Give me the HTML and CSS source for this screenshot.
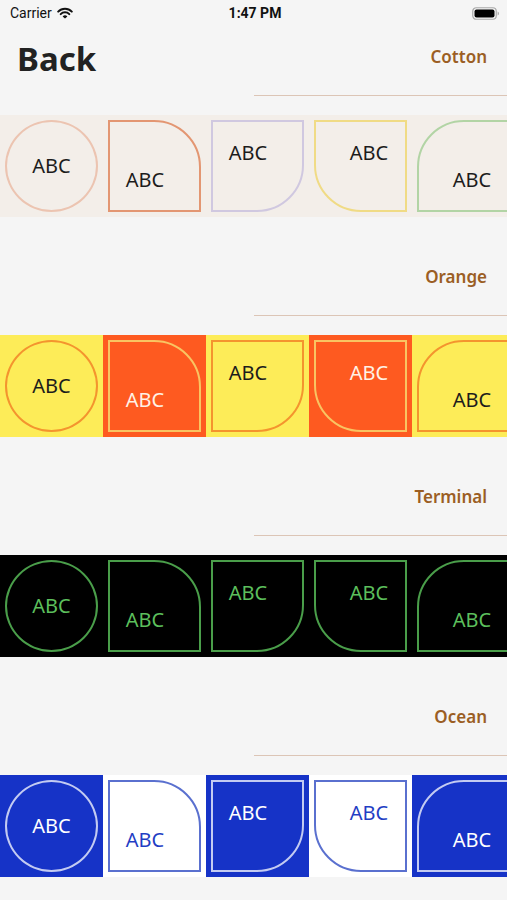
FILE: index.html
```html
<!DOCTYPE html>
<html>
<head>
<meta charset="utf-8">
<link rel="stylesheet" href="styles.css">
</head>
<body>
<div class="status">
  <div class="st-left">Carrier
    <svg class="wifi" viewBox="0 0 16 12" width="16" height="12">
      <path d="M1.2 4.6 A9.6 9.6 0 0 1 14.8 4.6" fill="none" stroke="#111" stroke-width="2" stroke-linecap="round"/>
      <path d="M3.7 7.1 A6.1 6.1 0 0 1 12.3 7.1" fill="none" stroke="#111" stroke-width="2" stroke-linecap="round"/>
      <path d="M8 11.6 L5.6 9.4 A3.4 3.4 0 0 1 10.4 9.4 Z" fill="#111"/>
    </svg>
  </div>
  <div class="st-time">1:47 PM</div>
  <div class="st-right">
    <svg viewBox="0 0 28 13" width="28" height="13">
      <rect x="0.75" y="0.75" width="23.5" height="11.5" rx="3.5" fill="none" stroke="#a9a9a9" stroke-width="1.2"/>
      <rect x="2.5" y="2.5" width="20" height="8" rx="2" fill="#000"/>
      <path d="M25.6 4.5 Q27 5 27 6.5 Q27 8 25.6 8.5 Z" fill="#a9a9a9"/>
    </svg>
  </div>
</div>

<section class="sec cotton">
  <div class="head first">
    <h1 class="title">Back</h1>
    <span class="label">Cotton</span>
  </div>
  <div class="rule"></div>
  <div class="band">
    <div class="tile t1"><div class="shape circle">ABC</div></div>
    <div class="tile t2"><div class="shape tr">ABC</div></div>
    <div class="tile t3"><div class="shape br">ABC</div></div>
    <div class="tile t4"><div class="shape bl">ABC</div></div>
    <div class="tile t5"><div class="shape tl">ABC</div></div>
  </div>
</section>

<section class="sec orange">
  <div class="head"><span class="label">Orange</span></div>
  <div class="rule"></div>
  <div class="band">
    <div class="tile a"><div class="shape circle">ABC</div></div>
    <div class="tile b"><div class="shape tr">ABC</div></div>
    <div class="tile a"><div class="shape br">ABC</div></div>
    <div class="tile b"><div class="shape bl">ABC</div></div>
    <div class="tile a"><div class="shape tl">ABC</div></div>
  </div>
</section>

<section class="sec terminal">
  <div class="head"><span class="label">Terminal</span></div>
  <div class="rule"></div>
  <div class="band">
    <div class="tile"><div class="shape circle">ABC</div></div>
    <div class="tile"><div class="shape tr">ABC</div></div>
    <div class="tile"><div class="shape br">ABC</div></div>
    <div class="tile"><div class="shape bl">ABC</div></div>
    <div class="tile"><div class="shape tl">ABC</div></div>
  </div>
</section>

<section class="sec ocean">
  <div class="head"><span class="label">Ocean</span></div>
  <div class="rule"></div>
  <div class="band">
    <div class="tile a"><div class="shape circle">ABC</div></div>
    <div class="tile b"><div class="shape tr">ABC</div></div>
    <div class="tile a"><div class="shape br">ABC</div></div>
    <div class="tile b"><div class="shape bl">ABC</div></div>
    <div class="tile a"><div class="shape tl">ABC</div></div>
  </div>
</section>
</body>
</html>
```

FILE: styles.css
```css
* { box-sizing: border-box; }
html, body { margin: 0; padding: 0; }
body {
  width: 507px;
  height: 900px;
  overflow: hidden;
  background: #f5f5f5;
  font-family: "Noto Sans", "Open Sans", sans-serif;
  color: #222;
}

.status {
  height: 28px;
  display: grid;
  grid-template-columns: 1fr auto 1fr;
  align-items: center;
  padding: 0 7px 2px 10px;
  font-family: Roboto, "Liberation Sans", sans-serif;
  font-size: 14px;
  color: #111;
}
.st-left { display: flex; align-items: center; gap: 5px; }
.wifi { margin-top: -1px; }
.st-time { font-weight: 700; font-size: 14px; }
.st-right { display: flex; justify-content: flex-end; padding-top: 1px; }

.head {
  height: 98px;
  display: flex;
  justify-content: flex-end;
  align-items: flex-end;
  padding: 0 20px 26px 17px;
}
.head.first {
  height: 67px;
  justify-content: space-between;
}
.title {
  margin: 0 0 -10px 0;
  font-size: 33px;
  line-height: 40px;
  font-weight: 700;
  color: #222;
}
.label {
  font-size: 17px;
  line-height: 24px;
  font-weight: 600;
  color: #9b5e24;
}
.rule {
  margin-left: 254px;
  height: 1px;
  background: #dcc5b6;
}

.band {
  margin-top: 19px;
  height: 102px;
  display: flex;
  overflow: hidden;
}
.tile {
  flex: 0 0 103px;
  height: 102px;
  padding: 5px 5px 5px 5px;
}
.shape {
  width: 93px;
  height: 92px;
  border: 2px solid;
  display: flex;
  align-items: center;
  justify-content: center;
  font-size: 20px;
  line-height: 24px;
  font-weight: 400;
}
.circle { border-radius: 50%; }
.tr { border-top-right-radius: 47px; padding: 28px 19px 0 0; }
.br { border-bottom-right-radius: 47px; padding: 0 19px 26px 0; }
.bl { border-bottom-left-radius: 47px; padding: 0 0 26px 17px; }
.tl { border-top-left-radius: 47px; padding: 28px 0 0 17px; }

/* Cotton */
.cotton .tile { background: #f3eee9; }
.cotton .shape { color: #1c1c1c; }
.cotton .t1 .shape { border-color: #ecc4b1; }
.cotton .t2 .shape { border-color: #e39672; }
.cotton .t3 .shape { border-color: #d0c8e0; }
.cotton .t4 .shape { border-color: #f0db85; }
.cotton .t5 .shape { border-color: #b2d4a5; }

/* Orange */
.orange .tile.a { background: #fdec58; }
.orange .tile.a .shape { border-color: #f4942e; color: #1c1c1c; }
.orange .tile.b { background: #fe5a20; }
.orange .tile.b .shape { border-color: #f9c462; color: #fff2e6; }

/* Terminal */
.terminal .tile { background: #000; }
.terminal .shape { border-color: #4a9e4a; color: #5cbf5c; }

/* Ocean */
.ocean .tile.a { background: #1633c7; }
.ocean .tile.a .shape { border-color: #c3cbf2; color: #fff; }
.ocean .tile.b { background: #fff; }
.ocean .tile.b .shape { border-color: #5a70cf; color: #1f3ec4; }
```
